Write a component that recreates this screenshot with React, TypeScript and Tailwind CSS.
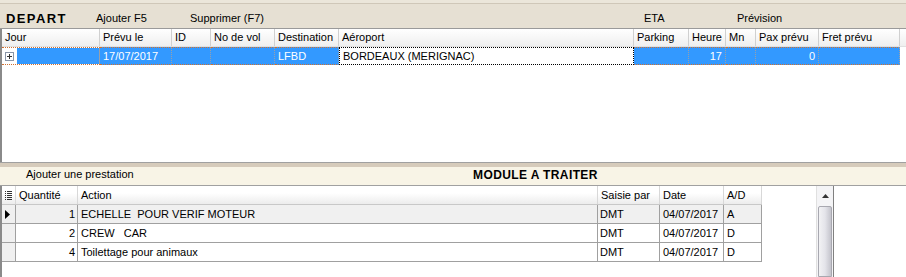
import React from "react";

const upCols = [
  { w: 98, h: "Jour" },
  { w: 72, h: "Prévu le" },
  { w: 39, h: "ID" },
  { w: 64, h: "No de vol" },
  { w: 64, h: "Destination" },
  { w: 295, h: "Aéroport" },
  { w: 55, h: "Parking" },
  { w: 37, h: "Heure" },
  { w: 30, h: "Mn" },
  { w: 63, h: "Pax prévu" },
  { w: 81, h: "Fret prévu" },
];

const rows = [
  { q: "1", a: "ECHELLE  POUR VERIF MOTEUR", s: "DMT", d: "04/07/2017", ad: "A", sel: true },
  { q: "2", a: "CREW   CAR", s: "DMT", d: "04/07/2017", ad: "D", sel: false },
  { q: "4", a: "Toilettage pour animaux", s: "DMT", d: "04/07/2017", ad: "D", sel: false },
];

export default function App() {
  return (
    <div className="w-[906px] h-[277px] overflow-hidden bg-white font-['Liberation_Sans',Arial,sans-serif] text-[11px] text-black flex flex-col">
      {/* top strip */}
      <div className="h-[3px] bg-[#ebe6da]" />
      <div className="h-[1px] bg-[#cfc7b8]" />
      {/* toolbar */}
      <div className="h-[24px] bg-[#e6e0d3] flex items-center pt-[5px] whitespace-pre">
        <span className="ml-[6px] w-[90px] font-bold text-[13px] tracking-[1.4px] leading-none">DEPART</span>
        <span className="w-[94px]">Ajouter F5</span>
        <span className="w-[454px]">Supprimer (F7)</span>
        <span className="w-[93px]">ETA</span>
        <span>Prévision</span>
      </div>
      <div className="h-[1px] bg-[#9a9a9a]" />
      {/* upper grid */}
      <div className="h-[133px] flex flex-col border-l-2 border-[#8a8a8a] bg-white">
        <div className="h-[18px] flex bg-gradient-to-b from-white to-[#efefef] border-b border-[#e0e0e0]">
          {upCols.map((c, i) => (
            <div
              key={i}
              style={{ width: c.w }}
              className="h-full border-r border-[#d0d0d0] pl-[3px] flex items-center whitespace-pre"
            >
              {c.h}
            </div>
          ))}
        </div>
        <div className="h-[18px] flex">
          <div className="w-[98px] h-full flex border-y border-dotted border-[#d07030]">
            <div className="w-[15px] h-full bg-white flex items-center justify-center">
              <div className="w-[9px] h-[9px] border border-[#8a96a8] bg-white flex items-center justify-center">
                <svg width="7" height="7" viewBox="0 0 7 7">
                  <path d="M1 3.5h5M3.5 1v5" stroke="#333" strokeWidth="1" />
                </svg>
              </div>
            </div>
            <div className="flex-1 bg-[#3399ff] border-r border-[#9aa0a8]" />
          </div>
          {[
            { w: 72, t: "17/07/2017" },
            { w: 39, t: "" },
            { w: 64, t: "" },
            { w: 64, t: "LFBD" },
          ].map((c, i) => (
            <div
              key={i}
              style={{ width: c.w }}
              className="h-full bg-[#3399ff] text-white border-r border-[#9aa0a8] border-y border-y-[#d07030] border-dotted pl-[3px] flex items-center"
            >
              {c.t}
            </div>
          ))}
          <div className="w-[295px] h-full bg-white border border-dotted border-black pl-[3px] flex items-center">
            BORDEAUX (MERIGNAC)
          </div>
          {[
            { w: 55, t: "", r: false },
            { w: 37, t: "17", r: true },
            { w: 30, t: "", r: false },
            { w: 63, t: "0", r: true },
            { w: 81, t: "", r: false },
          ].map((c, i) => (
            <div
              key={i}
              style={{ width: c.w }}
              className={
                "h-full bg-[#3399ff] text-white border-r border-[#9aa0a8] border-y border-y-[#d07030] border-dotted flex items-center px-[3px] " +
                (c.r ? "justify-end" : "")
              }
            >
              {c.t}
            </div>
          ))}
        </div>
        <div className="flex-1" />
      </div>
      <div className="h-[1px] bg-[#a0a0a0]" />
      <div className="h-[4px] bg-[#d6cbbb]" />
      {/* cream band */}
      <div className="h-[18px] bg-[#f8f4e6] flex items-center pb-[3px] whitespace-pre">
        <span className="ml-[26px] w-[447px]">Ajouter une prestation</span>
        <span className="font-bold text-[12px] tracking-[0.4px]">MODULE A TRAITER</span>
      </div>
      <div className="h-[1px] bg-[#a0a0a0]" />
      {/* lower grid */}
      <div className="flex-1 flex border-l-2 border-[#8a8a8a]">
        <div className="w-[760px] flex flex-col">
          <div className="h-[19px] flex bg-gradient-to-b from-white from-40% to-[#ececec] border-b border-[#c8c8c8]">
            <div className="w-[14px] h-full flex items-center justify-center border-r border-[#d8d8d8]">
              <svg width="7" height="9" viewBox="0 0 7 9">
                <path d="M0 0.5h1M0 2.5h1M0 4.5h1M0 6.5h1M0 8.5h1M2 0.5h5M2 2.5h5M2 4.5h5M2 6.5h5M2 8.5h5" stroke="#333" strokeWidth="1" />
              </svg>
            </div>
            {[
              { w: 62, h: "Quantité" },
              { w: 520, h: "Action" },
              { w: 62, h: "Saisie par" },
              { w: 64, h: "Date" },
              { w: 38, h: "A/D" },
            ].map((c, i) => (
              <div
                key={i}
                style={{ width: c.w }}
                className="h-full border-r border-[#d8d8d8] pl-[3px] flex items-center"
              >
                {c.h}
              </div>
            ))}
          </div>
          {rows.map((r, i) => (
            <div key={i} className="h-[19px] flex border-b border-[#a0a0a0]">
              <div className="w-[14px] h-full bg-[#f0f0f0] border-r border-[#a0a0a0] flex items-center pl-[3px]">
                {r.sel && (
                  <svg width="5" height="9" viewBox="0 0 5 9">
                    <path d="M0 0l5 4.5L0 9z" fill="#000" />
                  </svg>
                )}
              </div>
              <div className={"w-[62px] h-full border-r border-[#a0a0a0] flex items-center justify-end pr-[2px] " + (r.sel ? "bg-[#f0f0f0]" : "bg-white")}>
                {r.q}
              </div>
              <div className={"w-[520px] h-full border-r border-[#a0a0a0] flex items-center pl-[3px] whitespace-pre " + (r.sel ? "bg-[#f0f0f0]" : "bg-white")}>
                {r.a}
              </div>
              <div className={"w-[62px] h-full border-r border-[#a0a0a0] flex items-center pl-[2px] " + (r.sel ? "bg-[#f0f0f0]" : "bg-white")}>
                {r.s}
              </div>
              <div className={"w-[64px] h-full border-r border-[#a0a0a0] flex items-center pl-[3px] " + (r.sel ? "bg-[#f0f0f0]" : "bg-white")}>
                {r.d}
              </div>
              <div className={"w-[38px] h-full border-r border-[#a0a0a0] flex items-center pl-[3px] " + (r.sel ? "bg-[#f0f0f0]" : "bg-white")}>
                {r.ad}
              </div>
            </div>
          ))}
        </div>
        <div className="w-[54px]" />
        {/* scrollbar */}
        <div className="w-[17px] flex flex-col bg-[#f4f4f6] border-l border-[#e0e0e0]">
          <div className="h-[20px] flex items-center justify-center">
            <svg width="7" height="4" viewBox="0 0 7 4">
              <path d="M0 4L3.5 0L7 4z" fill="#333" />
            </svg>
          </div>
          <div className="flex-1 mx-[1px] rounded-t-[2px] border border-[#a8a8b0] bg-gradient-to-r from-[#f2f2f4] via-[#e4e4ea] to-[#c4c4cc]" />
        </div>
        <div className="w-[1px] bg-[#808080]" />
        <div className="flex-1 bg-white" />
      </div>
    </div>
  );
}
